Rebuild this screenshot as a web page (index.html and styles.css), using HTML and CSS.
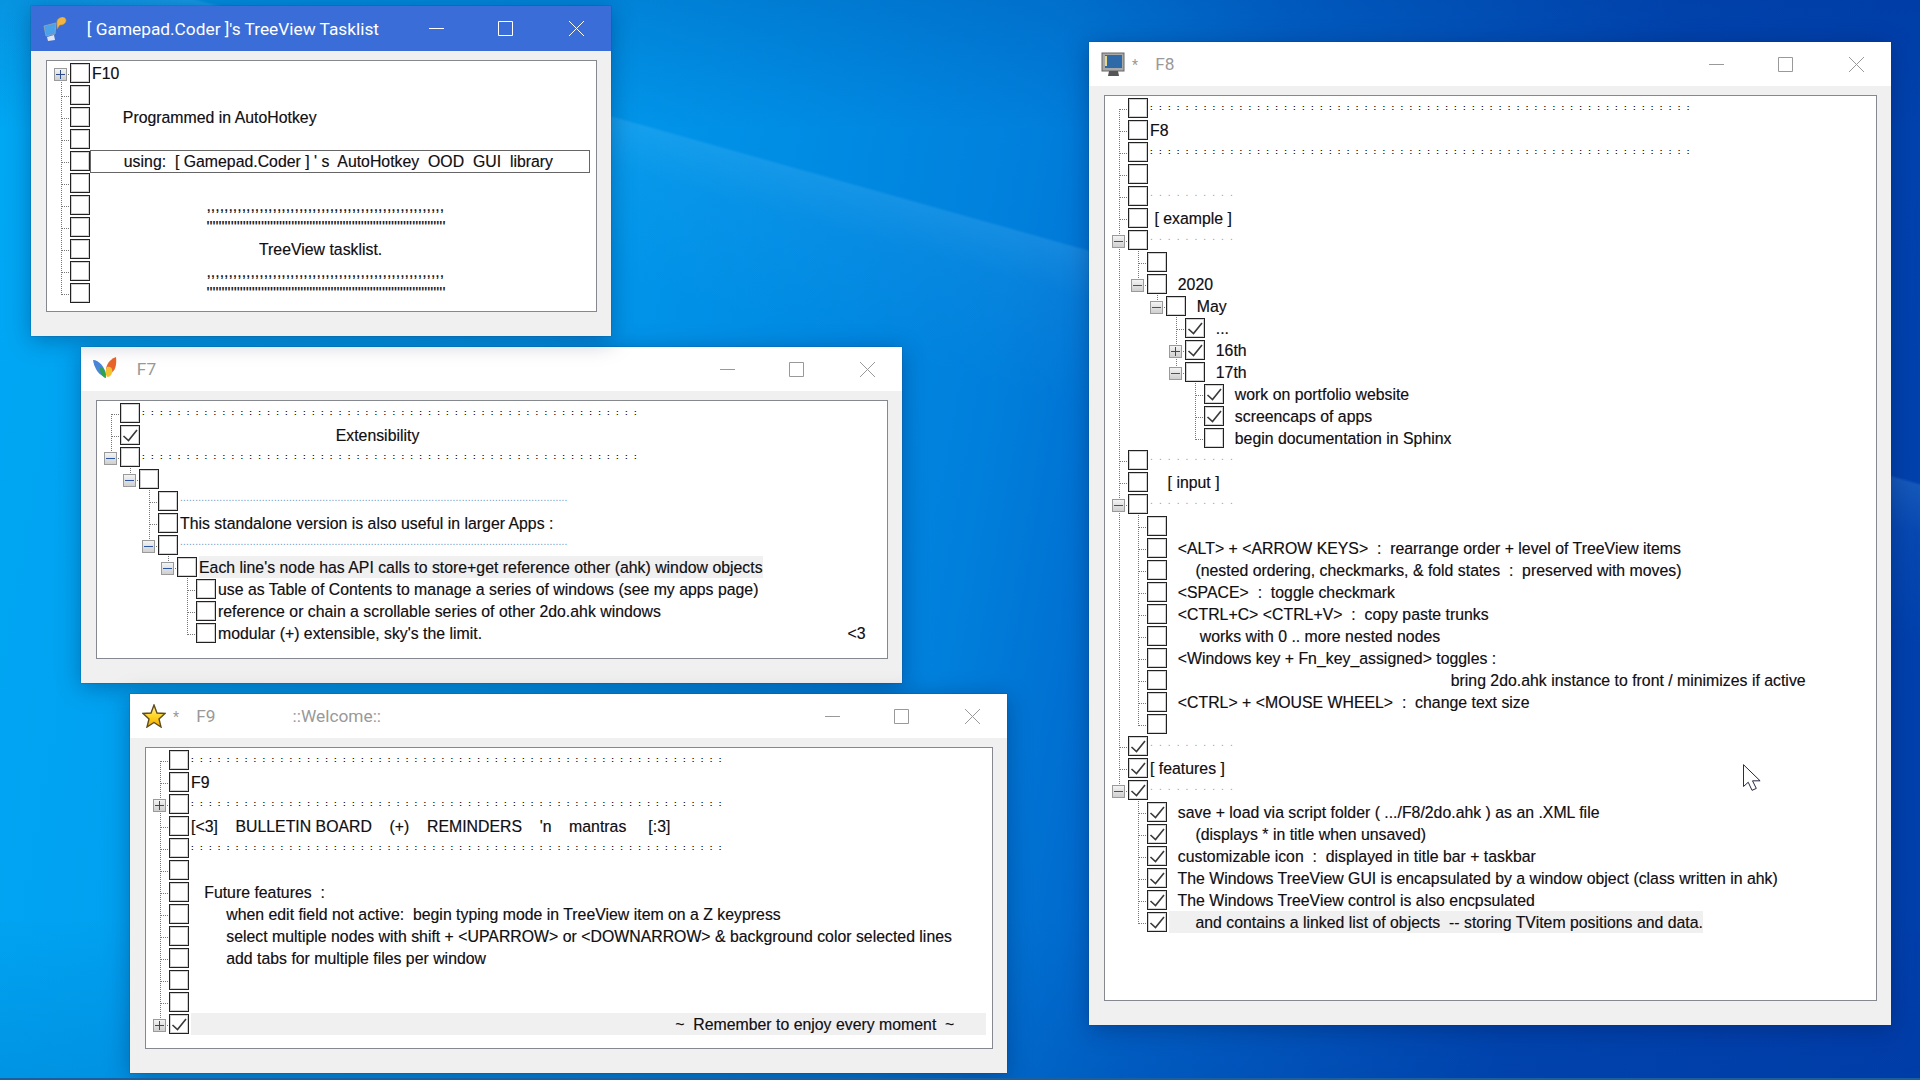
FILE: index.html
```html
<!DOCTYPE html>
<html>
<head>
<meta charset="UTF-8">
<title>TreeView Tasklist</title>
<link rel="stylesheet" href="styles.css">
</head>
<body>
<svg class="defs" width="0" height="0">
	<defs>
		<linearGradient id="gold" x1="0" y1="0" x2="0" y2="1"><stop offset="0" stop-color="#fff2a0"/><stop offset=".55" stop-color="#ffd21f"/><stop offset="1" stop-color="#f0a800"/></linearGradient>
	</defs>
	<symbol id="tick" viewBox="0 0 18 18"><path d="M2.5 10 L7.5 14.5 L16 4" fill="none" stroke="#3a3a3a" stroke-width="1.6"/></symbol>
	<symbol id="min" viewBox="0 0 15 15"><path d="M0 7.5H15" stroke="currentColor" fill="none"/></symbol>
	<symbol id="max" viewBox="0 0 15 15"><path d="M.5 .5H14.5V14.5H.5Z" stroke="currentColor" fill="none"/></symbol>
	<symbol id="cls" viewBox="0 0 15 15"><path d="M0 0L15 15M15 0L0 15" stroke="currentColor" fill="none"/></symbol>
</svg>

<!-- F8 -->
<div class="win w8">
	<div class="bar">
		<svg class="ico" viewBox="0 0 24 24"><rect x="1" y="1" width="22" height="18" fill="#a9a9a9" stroke="#666"/><rect x="4" y="3" width="17" height="13" fill="#2f6aa8"/><rect x="4" y="4" width="2" height="10" fill="#e8d98a"/><path d="M8 19H17L18 24H7Z" fill="#555"/></svg>
		<span class="ttl"><small>*</small>    F8</span>
		<svg class="btn"><use href="#min"/></svg><svg class="btn"><use href="#max"/></svg><svg class="btn"><use href="#cls"/></svg>
	</div>
	<div class="body"><div class="tree">
		<div class="row"><i class="c top"></i><b class="box"></b><span class="txt dots">:::::::::::::::::::::::::::::::::::::::::::::::::::::::::::::</span></div>
		<div class="row"><i class="c tee"></i><b class="box"></b><span class="txt">F8</span></div>
		<div class="row"><i class="c tee"></i><b class="box"></b><span class="txt dots">:::::::::::::::::::::::::::::::::::::::::::::::::::::::::::::</span></div>
		<div class="row"><i class="c tee"></i><b class="box"></b></div>
		<div class="row"><i class="c tee"></i><b class="box"></b><span class="txt pale">..........</span></div>
		<div class="row"><i class="c tee"></i><b class="box"></b><span class="txt"> [ example ]</span></div>
		<div class="row"><i class="c tee"><u class="exp minus"></u></i><b class="box"></b><span class="txt pale">..........</span></div>
		<div class="row"><i class="c v"></i><i class="c tee"></i><b class="box"></b></div>
		<div class="row"><i class="c v"></i><i class="c end"><u class="exp minus"></u></i><b class="box"></b><span class="txt">  2020</span></div>
		<div class="row"><i class="c v"></i><i class="c"></i><i class="c end"><u class="exp minus"></u></i><b class="box"></b><span class="txt">  May</span></div>
		<div class="row"><i class="c v"></i><i class="c"></i><i class="c"></i><i class="c tee"></i><b class="box"><svg><use href="#tick"/></svg></b><span class="txt">  ...</span></div>
		<div class="row"><i class="c v"></i><i class="c"></i><i class="c"></i><i class="c tee"><u class="exp plus"></u></i><b class="box"><svg><use href="#tick"/></svg></b><span class="txt">  16th</span></div>
		<div class="row"><i class="c v"></i><i class="c"></i><i class="c"></i><i class="c end"><u class="exp minus"></u></i><b class="box"></b><span class="txt">  17th</span></div>
		<div class="row"><i class="c v"></i><i class="c"></i><i class="c"></i><i class="c"></i><i class="c tee"></i><b class="box"><svg><use href="#tick"/></svg></b><span class="txt">  work on portfolio website</span></div>
		<div class="row"><i class="c v"></i><i class="c"></i><i class="c"></i><i class="c"></i><i class="c tee"></i><b class="box"><svg><use href="#tick"/></svg></b><span class="txt">  screencaps of apps</span></div>
		<div class="row"><i class="c v"></i><i class="c"></i><i class="c"></i><i class="c"></i><i class="c end"></i><b class="box"></b><span class="txt">  begin documentation in Sphinx</span></div>
		<div class="row"><i class="c tee"></i><b class="box"></b><span class="txt pale">..........</span></div>
		<div class="row"><i class="c tee"></i><b class="box"></b><span class="txt">    [ input ]</span></div>
		<div class="row"><i class="c tee"><u class="exp minus"></u></i><b class="box"></b><span class="txt pale">..........</span></div>
		<div class="row"><i class="c v"></i><i class="c tee"></i><b class="box"></b></div>
		<div class="row"><i class="c v"></i><i class="c tee"></i><b class="box"></b><span class="txt">  &lt;ALT&gt; + &lt;ARROW KEYS&gt;  :  rearrange order + level of TreeView items</span></div>
		<div class="row"><i class="c v"></i><i class="c tee"></i><b class="box"></b><span class="txt">      (nested ordering, checkmarks, &amp; fold states  :  preserved with moves)</span></div>
		<div class="row"><i class="c v"></i><i class="c tee"></i><b class="box"></b><span class="txt">  &lt;SPACE&gt;  :  toggle checkmark</span></div>
		<div class="row"><i class="c v"></i><i class="c tee"></i><b class="box"></b><span class="txt">  &lt;CTRL+C&gt; &lt;CTRL+V&gt;  :  copy paste trunks</span></div>
		<div class="row"><i class="c v"></i><i class="c tee"></i><b class="box"></b><span class="txt">       works with 0 .. more nested nodes</span></div>
		<div class="row"><i class="c v"></i><i class="c tee"></i><b class="box"></b><span class="txt">  &lt;Windows key + Fn_key_assigned&gt; toggles :</span></div>
		<div class="row"><i class="c v"></i><i class="c tee"></i><b class="box"></b><span class="txt">                                                                bring 2do.ahk instance to front / minimizes if active</span></div>
		<div class="row"><i class="c v"></i><i class="c tee"></i><b class="box"></b><span class="txt">  &lt;CTRL&gt; + &lt;MOUSE WHEEL&gt;  :  change text size</span></div>
		<div class="row"><i class="c v"></i><i class="c end"></i><b class="box"></b></div>
		<div class="row"><i class="c tee"></i><b class="box"><svg><use href="#tick"/></svg></b><span class="txt pale">..........</span></div>
		<div class="row"><i class="c tee"></i><b class="box"><svg><use href="#tick"/></svg></b><span class="txt">[ features ]</span></div>
		<div class="row"><i class="c end"><u class="exp minus"></u></i><b class="box"><svg><use href="#tick"/></svg></b><span class="txt pale">..........</span></div>
		<div class="row"><i class="c"></i><i class="c tee"></i><b class="box"><svg><use href="#tick"/></svg></b><span class="txt">  save + load via script folder ( .../F8/2do.ahk ) as an .XML file</span></div>
		<div class="row"><i class="c"></i><i class="c tee"></i><b class="box"><svg><use href="#tick"/></svg></b><span class="txt">      (displays * in title when unsaved)</span></div>
		<div class="row"><i class="c"></i><i class="c tee"></i><b class="box"><svg><use href="#tick"/></svg></b><span class="txt">  customizable icon  :  displayed in title bar + taskbar</span></div>
		<div class="row"><i class="c"></i><i class="c tee"></i><b class="box"><svg><use href="#tick"/></svg></b><span class="txt">  The Windows TreeView GUI is encapsulated by a window object (class written in ahk)</span></div>
		<div class="row"><i class="c"></i><i class="c tee"></i><b class="box"><svg><use href="#tick"/></svg></b><span class="txt">  The Windows TreeView control is also encpsulated</span></div>
		<div class="row"><i class="c"></i><i class="c end"></i><b class="box"><svg><use href="#tick"/></svg></b><span class="txt hl">      and contains a linked list of objects  -- storing TVitem positions and data.</span></div>
	</div></div>
</div>

<!-- F7 -->
<div class="win w7">
	<div class="bar">
		<svg class="ico" viewBox="0 0 24 24"><path d="M0 3C6 3 12 10 13 18L10 19C5 17 1 10 0 3Z" fill="#4a86d8"/><path d="M23 0C24 8 22 14 18 16L13 17C12 10 15 3 23 0Z" fill="#e8642a"/><path d="M14 10C18 9 20 12 19 16C18 19 16 20 14 20C12 17 12 13 14 10Z" fill="#f2c230"/><path d="M7 10C11 11 13 15 13 21C10 21 7 17 7 10Z" fill="#2fa24a"/></svg>
		<span class="ttl">   F7</span>
		<svg class="btn"><use href="#min"/></svg><svg class="btn"><use href="#max"/></svg><svg class="btn"><use href="#cls"/></svg>
	</div>
	<div class="body"><div class="tree">
		<div class="row"><i class="c top"></i><b class="box"></b><span class="txt dots">::::::::::::::::::::::::::::::::::::::::::::::::::::::::</span></div>
		<div class="row"><i class="c tee"></i><b class="box"><svg><use href="#tick"/></svg></b><span class="txt">                                            Extensibility</span></div>
		<div class="row"><i class="c end"><u class="exp minus"></u></i><b class="box"></b><span class="txt dots">::::::::::::::::::::::::::::::::::::::::::::::::::::::::</span></div>
		<div class="row"><i class="c"></i><i class="c end"><u class="exp minus"></u></i><b class="box"></b></div>
		<div class="row"><i class="c"></i><i class="c"></i><i class="c tee"></i><b class="box"></b><span class="txt fine">................................................................................................................................</span></div>
		<div class="row"><i class="c"></i><i class="c"></i><i class="c tee"></i><b class="box"></b><span class="txt">This standalone version is also useful in larger Apps :</span></div>
		<div class="row"><i class="c"></i><i class="c"></i><i class="c end"><u class="exp minus"></u></i><b class="box"></b><span class="txt fine">................................................................................................................................</span></div>
		<div class="row"><i class="c"></i><i class="c"></i><i class="c"></i><i class="c end"><u class="exp minus"></u></i><b class="box"></b><span class="txt hl">Each line's node has API calls to store+get reference other (ahk) window objects</span></div>
		<div class="row"><i class="c"></i><i class="c"></i><i class="c"></i><i class="c"></i><i class="c tee"></i><b class="box"></b><span class="txt">use as Table of Contents to manage a series of windows (see my apps page)</span></div>
		<div class="row"><i class="c"></i><i class="c"></i><i class="c"></i><i class="c"></i><i class="c tee"></i><b class="box"></b><span class="txt">reference or chain a scrollable series of other 2do.ahk windows</span></div>
		<div class="row"><i class="c"></i><i class="c"></i><i class="c"></i><i class="c"></i><i class="c end"></i><b class="box"></b><span class="txt">modular (+) extensible, sky's the limit.                                                                                   &lt;3</span></div>
	</div></div>
</div>

<!-- F9 -->
<div class="win w9">
	<div class="bar">
		<svg class="ico" viewBox="0 0 24 24"><path d="M12 1L15 9L23 9.500L17 15L19 23L12 18.500L5 23L7 15L1 9.500L9 9Z" fill="url(#gold)" stroke="#5e4c1c" stroke-width="1.400"/></svg>
		<span class="ttl"><small>*</small>    F9                  ::Welcome::</span>
		<svg class="btn"><use href="#min"/></svg><svg class="btn"><use href="#max"/></svg><svg class="btn"><use href="#cls"/></svg>
	</div>
	<div class="body"><div class="tree">
		<div class="row"><i class="c top"></i><b class="box"></b><span class="txt dots">::::::::::::::::::::::::::::::::::::::::::::::::::::::::::::</span></div>
		<div class="row"><i class="c tee"></i><b class="box"></b><span class="txt">F9</span></div>
		<div class="row"><i class="c tee"><u class="exp plus"></u></i><b class="box"></b><span class="txt dots">::::::::::::::::::::::::::::::::::::::::::::::::::::::::::::</span></div>
		<div class="row"><i class="c tee"></i><b class="box"></b><span class="txt">[&lt;3]    BULLETIN BOARD    (+)    REMINDERS    'n    mantras     [:3]</span></div>
		<div class="row"><i class="c tee"></i><b class="box"></b><span class="txt dots">::::::::::::::::::::::::::::::::::::::::::::::::::::::::::::</span></div>
		<div class="row"><i class="c tee"></i><b class="box"></b></div>
		<div class="row"><i class="c tee"></i><b class="box"></b><span class="txt">   Future features  :</span></div>
		<div class="row"><i class="c tee"></i><b class="box"></b><span class="txt">        when edit field not active:  begin typing mode in TreeView item on a Z keypress</span></div>
		<div class="row"><i class="c tee"></i><b class="box"></b><span class="txt">        select multiple nodes with shift + &lt;UPARROW&gt; or &lt;DOWNARROW&gt; &amp; background color selected lines</span></div>
		<div class="row"><i class="c tee"></i><b class="box"></b><span class="txt">        add tabs for multiple files per window</span></div>
		<div class="row"><i class="c tee"></i><b class="box"></b></div>
		<div class="row"><i class="c tee"></i><b class="box"></b></div>
		<div class="row"><i class="c end"><u class="exp plus"></u></i><b class="box"><svg><use href="#tick"/></svg></b><span class="txt hl wide">                                                                                                              ~  Remember to enjoy every moment  ~</span></div>
	</div></div>
</div>

<!-- main window, active -->
<div class="win w10 active">
	<div class="bar">
		<svg class="ico" viewBox="0 0 24 24"><path d="M1 9L13 6L12 17L3 19Z" fill="#4aa3ea" stroke="#8aa0b8"/><path d="M4 20L11 18L12 23L5 24Z" fill="#dfe6ef"/><path d="M14 7C13 2 17 0 20 0C24 1 24 5 21 7C20 8 18 8 17 8L14 12Z" fill="#f2b544" stroke="#b8862a" stroke-width=".6"/></svg>
		<span class="ttl">   [ Gamepad.Coder ]'s TreeView Tasklist</span>
		<svg class="btn"><use href="#min"/></svg><svg class="btn"><use href="#max"/></svg><svg class="btn"><use href="#cls"/></svg>
	</div>
	<div class="body"><div class="tree">
		<div class="row"><i class="c top"><u class="exp plus"></u></i><b class="box"></b><span class="txt">F10</span></div>
		<div class="row"><i class="c tee"></i><b class="box"></b></div>
		<div class="row"><i class="c tee"></i><b class="box"></b><span class="txt">       Programmed in AutoHotkey</span></div>
		<div class="row"><i class="c tee"></i><b class="box"></b></div>
		<div class="row"><i class="c tee"></i><b class="box"></b><span class="txt edit">       using:  [ Gamepad.Coder ] ' s  AutoHotkey  OOD  GUI  library</span></div>
		<div class="row"><i class="c tee"></i><b class="box"></b></div>
		<div class="row"><i class="c tee"></i><b class="box"></b><span class="txt">                          ,,,,,,,,,,,,,,,,,,,,,,,,,,,,,,,,,,,,,,,,,,,,,,,,,,,,,,</span></div>
		<div class="row"><i class="c tee"></i><b class="box"></b><span class="txt">                          '''''''''''''''''''''''''''''''''''''''''''''''''''''''''''''''''''''''''''''''</span></div>
		<div class="row"><i class="c tee"></i><b class="box"></b><span class="txt">                                      TreeView tasklist.</span></div>
		<div class="row"><i class="c tee"></i><b class="box"></b><span class="txt">                          ,,,,,,,,,,,,,,,,,,,,,,,,,,,,,,,,,,,,,,,,,,,,,,,,,,,,,,</span></div>
		<div class="row"><i class="c end"></i><b class="box"></b><span class="txt">                          '''''''''''''''''''''''''''''''''''''''''''''''''''''''''''''''''''''''''''''''</span></div>
	</div></div>
</div>

<svg class="cursor" viewBox="0 0 20 28"><path d="M.5 .5V23.500L5.500 19L9.500 27.500L14 25.500L10 17.500H18Z" fill="#fff" stroke="#1a1a3a"/></svg>
<div class="edge"></div>
</body>
</html>
```

FILE: styles.css
```css
html,body{
	margin:0;
	padding:0;
	width:1920px;
	height:1080px;
	overflow:hidden;
}
body{
	position:relative;
	font-family:"Liberation Sans",Arial,sans-serif;
	background:
		linear-gradient(195.7deg,transparent 29.8%,rgba(130,210,255,.16) 30%,rgba(130,210,255,.05) 33%,transparent 40%),
		linear-gradient(180deg,rgba(0,40,130,.18) 0,transparent 12%,transparent 85%,rgba(0,40,130,.12) 100%),
		linear-gradient(100deg,#00a8f4 0,#0099ec 28%,#0080dc 50%,#0062c8 62%,#0046b2 80%,#003fac 100%);
}
.defs{position:absolute;}
.edge{
	position:absolute;
	left:0;
	right:0;
	bottom:0;
	height:2px;
	background:#1c5f9e;
}
.cursor{
	position:absolute;
	left:1743px;
	top:764px;
	width:19px;
	height:27px;
}

/* windows */
.win{
	position:absolute;
	display:flex;
	flex-direction:column;
	box-sizing:border-box;
	background:#f0f0f0;
	box-shadow:0 0 1px rgba(30,50,90,.8),0 4px 22px rgba(0,20,70,.35);
}
.w10{left:31px;top:6px;width:580px;height:330px;}
.w7{left:81px;top:347px;width:821px;height:336px;}
.w9{left:130px;top:694px;width:877px;height:379px;}
.w8{left:1089px;top:42px;width:802px;height:983px;}

.bar{
	display:flex;
	align-items:center;
	flex:none;
	height:44px;
	padding-left:12px;
	background:#fff;
	color:#999;
}
.active .bar{
	height:45px;
	background:#3a6dd8;
	color:#fff;
}
.ico{
	flex:none;
	width:24px;
	height:24px;
}
.ttl{
	flex:1;
	margin-left:7px;
	font:17.3px Roboto,"Liberation Sans",sans-serif;
	white-space:pre;
}
.ttl small{font-size:14px;}
.btn{
	flex:none;
	width:15px;
	height:15px;
	margin:0 27px;
	overflow:visible;
}
.btn:last-child{margin-left:29px;}

.body{
	flex:1;
	display:flex;
	padding:9px 14px 24px 15px;
	min-height:0;
}
.tree{
	flex:1;
	box-sizing:border-box;
	padding:1px 6px 0 4px;
	background:#fff;
	border:1px solid #85888f;
}

/* tree rows */
.row{
	display:flex;
	align-items:center;
	height:22px;
}
.c{
	flex:none;
	display:block;
	align-self:stretch;
	width:19px;
	--d:repeating-linear-gradient(#777 0 1px,transparent 1px 2px);
	--h:repeating-linear-gradient(90deg,#777 0 1px,transparent 1px 2px);
	background-repeat:no-repeat;
}
.v{
	background-image:var(--d);
	background-position:10px 0;
	background-size:1px 100%;
}
.tee{
	background-image:var(--h),var(--d);
	background-position:11px 12px,10px 0;
	background-size:8px 1px,1px 100%;
}
.end{
	background-image:var(--h),var(--d);
	background-position:11px 12px,10px 0;
	background-size:8px 1px,1px 13px;
}
.top{
	background-image:var(--h),var(--d);
	background-position:11px 12px,10px 12px;
	background-size:8px 1px,1px 10px;
}
.exp{
	display:block;
	box-sizing:border-box;
	width:13px;
	height:13px;
	margin-left:3px;
	transform:translateY(6px);
	border:1px solid #9a9a9a;
	background-repeat:no-repeat;
	background-position:center;
}
.minus{
	background-image:
		linear-gradient(#2a55a5,#2a55a5),
		linear-gradient(#f4f4f4,#cfcfcf);
	background-size:9px 1px,100% 100%;
}
.plus{
	background-image:
		linear-gradient(#2a4a8a,#2a4a8a),
		linear-gradient(#2a4a8a,#2a4a8a),
		linear-gradient(#f4f4f4,#cfcfcf);
	background-size:9px 1px,1px 9px,100% 100%;
}
.box{
	flex:none;
	box-sizing:border-box;
	display:block;
	width:20px;
	height:20px;
	background:#fff;
	border:1px solid #222;
	box-shadow:inset 0 0 0 1px rgba(0,0,0,.18);
}
.box svg{display:block;width:18px;height:18px;}

.txt{
	margin:1px 0 0 2px;
	font-size:15.85px;
	line-height:22px;
	color:#111;
	white-space:pre;
	text-shadow:-.5px 0 rgba(0,110,255,.3),.5px 0 rgba(255,120,0,.3);
}
.dots{
	margin-top:0;
	font-size:8px;
	font-weight:bold;
	letter-spacing:6.280px;
	color:#000;
	text-shadow:none;
}
.pale{
	margin-top:0;
	margin-bottom:6px;
	font-size:10px;
	letter-spacing:6.100px;
	color:#8b9db5;
	text-shadow:none;
}
.fine{
	margin-top:0;
	margin-bottom:6px;
	font-size:10px;
	letter-spacing:.25px;
	color:#6a98c8;
	text-shadow:none;
}
.hl{
	margin-top:0;
	padding-top:1px;
	height:21px;
	background:#f0f0f0;
}
.wide{flex:1;}
.edit{
	flex:1;
	box-sizing:border-box;
	height:23px;
	margin:1px 0 0;
	padding-left:2px;
	border:1px solid #666;
	line-height:21px;
}
```
